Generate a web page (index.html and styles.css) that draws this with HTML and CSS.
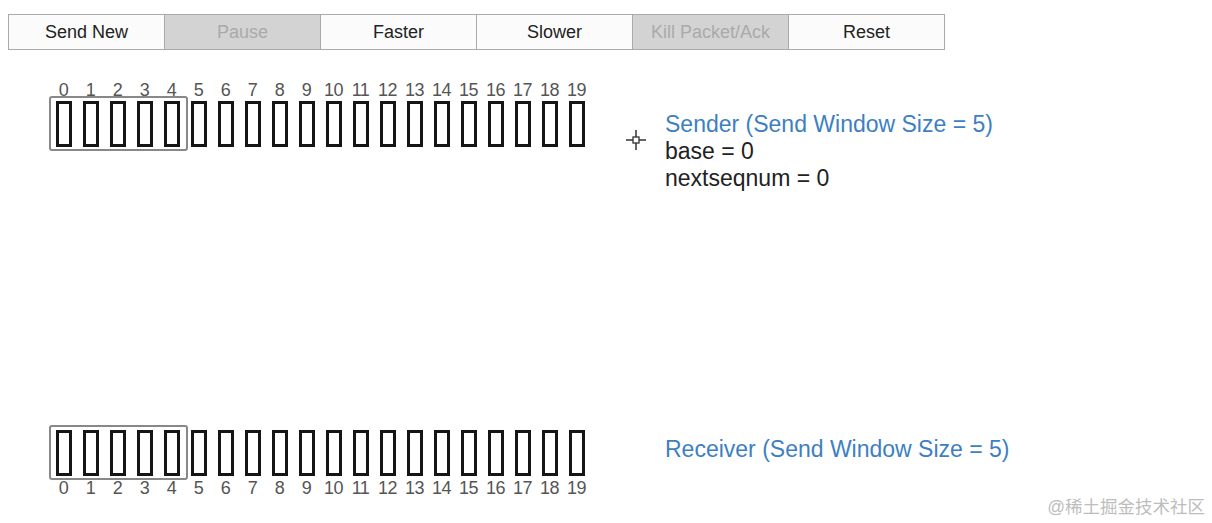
FILE: index.html
```html
<!DOCTYPE html>
<html lang="en">
<head>
  <meta charset="UTF-8">
  <title>Go-Back-N</title>
  <link rel="stylesheet" href="styles.css">
</head>
<body>
  <div class="toolbar">
    <button class="btn">Send New</button>
    <button class="btn" disabled>Pause</button>
    <button class="btn">Faster</button>
    <button class="btn">Slower</button>
    <button class="btn" disabled>Kill Packet/Ack</button>
    <button class="btn">Reset</button>
  </div>

  <div class="section sender">
    <div class="strip">
      <div class="nums" id="sender-nums"></div>
      <div class="slots" id="sender-slots"></div>
      <div class="frame"></div>
    </div>
    <div class="info">
      <div class="title">Sender (Send Window Size = 5)</div>
      <div>base = 0</div>
      <div>nextseqnum = 0</div>
    </div>
    <svg class="cursor" width="22" height="22" viewBox="0 0 22 22">
      <path d="M11 1v7M11 14v7M1 11h7M14 11h7" stroke="#333" stroke-width="1.5"/>
      <rect x="8" y="8" width="6" height="6" fill="#fff" stroke="#333" stroke-width="1.3"/>
    </svg>
  </div>

  <div class="section receiver">
    <div class="strip">
      <div class="slots" id="receiver-slots"></div>
      <div class="nums" id="receiver-nums"></div>
      <div class="frame"></div>
    </div>
    <div class="info">
      <div class="title">Receiver (Send Window Size = 5)</div>
    </div>
  </div>

  <div class="watermark">@稀土掘金技术社区</div>

  <script>
    // build the 20 sequence number slots for both rows
    ['sender', 'receiver'].forEach(function (side) {
      const nums = document.getElementById(side + '-nums');
      const slots = document.getElementById(side + '-slots');
      for (let i = 0; i < 20; i++) {
        const n = document.createElement('span');
        n.textContent = i;
        nums.appendChild(n);
        const cell = document.createElement('span');
        cell.innerHTML = '<i class="slot"></i>';
        slots.appendChild(cell);
      }
    });
  </script>
</body>
</html>
```

FILE: styles.css
```css
body {
  margin: 0;
  font-family: "Liberation Sans", Arial, sans-serif;
  background: #fff;
  color: #222;
}
.toolbar {
  display: flex;
  padding: 14px 0 0 8px;
}
.btn {
  width: 157px;
  height: 36px;
  margin-right: -1px;
  border: 1px solid #aaa;
  background: #fbfbfb;
  font-family: inherit;
  font-size: 18px;
  color: #222;
  padding: 0;
}
.btn:disabled {
  background: #d3d3d3;
  color: #aaa;
}
.section {
  display: flex;
  position: relative;
  padding-left: 50px;
}
.sender {
  margin-top: 31px;
}
.receiver {
  margin-top: 238px;
}
.strip {
  position: relative;
  width: 540px;
}
.nums {
  display: flex;
  height: 18px;
}
.nums span {
  width: 27px;
  text-align: center;
  font-size: 18px;
  line-height: 18px;
  color: #555;
  letter-spacing: -0.5px;
}
.slots {
  display: flex;
}
.slots span {
  width: 27px;
  display: flex;
  justify-content: center;
}
.slot {
  display: block;
  width: 16px;
  height: 46px;
  border: 3px solid #151515;
  box-sizing: border-box;
}
.sender .slots {
  margin-top: 2px;
}
.receiver .nums {
  margin-top: 3px;
}
.frame {
  position: absolute;
  left: -1px;
  width: 139px;
  height: 55px;
  border: 2px solid #888;
  border-radius: 3px;
  box-sizing: border-box;
}
.sender .frame {
  top: 15px;
}
.receiver .frame {
  top: -5px;
}
.info {
  margin-left: 75px;
  font-size: 23px;
  line-height: 27px;
  color: #222;
}
.sender .info {
  padding-top: 30px;
}
.receiver .info {
  padding-top: 6px;
}
.title {
  color: #3d7fc2;
}
.cursor {
  position: absolute;
  left: 625px;
  top: 48px;
}
.watermark {
  position: absolute;
  right: 7px;
  top: 493px;
  font-size: 17.5px;
  color: #bdbdbd;
  font-family: "Liberation Sans", "Noto Sans CJK SC", sans-serif;
}
```
